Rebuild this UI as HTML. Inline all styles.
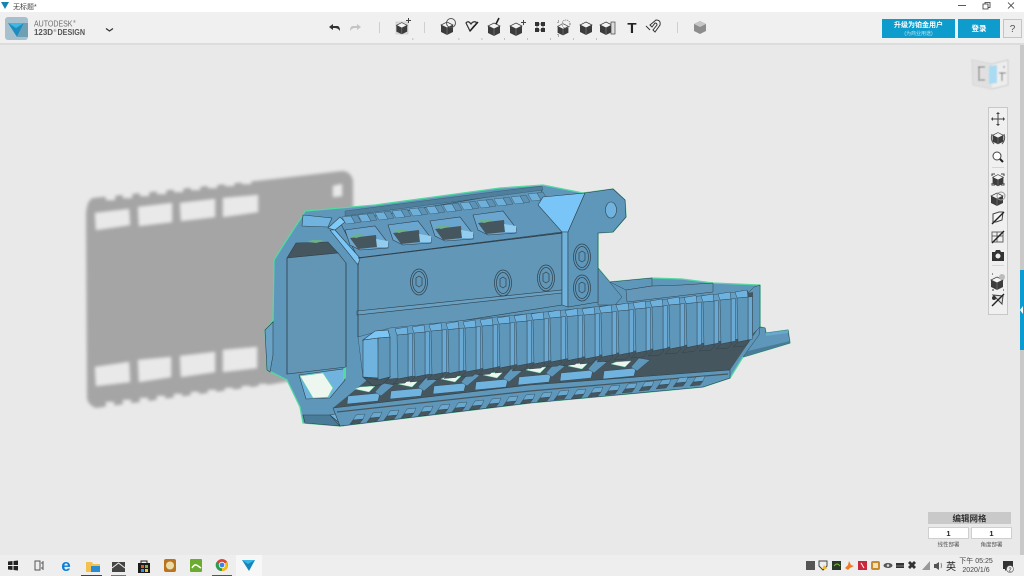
<!DOCTYPE html>
<html lang="zh"><head><meta charset="utf-8"><title>123D Design</title>
<style>
html,body{margin:0;padding:0;width:1024px;height:576px;overflow:hidden;background:#e9e9e9}
svg{display:block;position:absolute;left:0;top:0}
text{font-family:"Liberation Sans","Noto Sans CJK SC",sans-serif}
</style></head><body>
<svg width="1024" height="576" viewBox="0 0 1024 576" xmlns="http://www.w3.org/2000/svg">
<defs>
<filter id="b" x="-5%" y="-5%" width="110%" height="110%"><feGaussianBlur stdDeviation="1.600"/></filter>
<filter id="s" x="-20%" y="-20%" width="140%" height="140%"><feGaussianBlur stdDeviation="0.7"/></filter>
<g id="cube"><path d="M0-6 6-3 6 4 0 7-6 4-6-3Z" fill="#3c3c3c"/><path d="M0-6 6-3 0 0-6-3Z" fill="#f4f4f4" stroke="#3c3c3c" stroke-width=".7"/><path d="M0 0V7" stroke="#888" stroke-width=".6"/></g>
<g id="tooth" stroke="#2f414c" stroke-width=".45">
<path d="M13 7 17.500 6.500 17.500 49 13 50Z" fill="#69a9d3"/>
<path d="M2 8 13 7 13 50 3 52Z" fill="#5f97ba"/>
<path d="M0 2 12 0 13 7 2 8Z" fill="#6eb2e0"/>
<path d="M3 52 13 50 14 52 10 56-2 57Z" fill="#46565e"/>
</g>
<g id="btooth" stroke="#2f414c" stroke-width=".4">
<path d="M-4 6 6 5 3 9-7 10Z" fill="#46565e"/>
<path d="M-1 1 8 0 6 5-4 6Z" fill="#6ba8d0"/>
</g>
<g id="ttooth" stroke="#2f414c" stroke-width=".35">
<path d="M0 0 9-1 13 6 4 7Z" fill="#6eb0da"/>
<path d="M9-1 15-2 19 5 13 6Z" fill="#5b92b5"/>
</g>
<g id="win">
<path d="M345 230 375 226 388 243 388 248 360 250 350 245Z" fill="#6aa6cf" stroke="#2f414c" stroke-width=".6"/>
<path d="M350 238 376 235 377 247 358 249Z" fill="#46565e"/>
<path d="M376 239 388 241 388 247 377 247Z" fill="#92cdf0"/>
<path d="M349 236 358 234 366 235 356 238Z" fill="#6db08d"/>
</g>
<g id="cell" stroke="#2f414c" stroke-width=".4">
<path d="M398 384 403 382 418 381 412 387Z" fill="#ecf6ee" stroke="#5ad9a4"/>
<path d="M391 391 423 388 421 396 390 399Z" fill="#6fb3de"/>
<path d="M418 387 426 378 437 380 424 391Z" fill="#5f97ba"/>
</g>
<g id="screw" fill="none" stroke="#2f414c" stroke-width=".7">
<ellipse cx="0" cy="0" rx="8.500" ry="13"/><ellipse cx="0" cy="0" rx="6.500" ry="10.500"/>
<path d="M-3-4 0-6 3-4 3 3 0 5-3 3Z"/>
</g>
</defs>

<!-- canvas -->
<rect width="1024" height="576" fill="#e9e9e9"/>

<!-- shadow -->
<g filter="url(#b)">
<path d="M86 214Q87 200 93 198L265 180 342 171Q350 171 353 180L354 370 267 385 96 408Q88 405 87 398Z" fill="#a5a5a5"/>
<g fill="#e9e9e9">
<path d="M95 213 129 209 130 225 96 230Z"/><path d="M138 207 172 203 172 222 139 226Z"/><path d="M180 203 215 199 215 217 181 221Z"/><path d="M223 198 258 195 258 212 223 217Z"/>
<path d="M95 367 129 362 130 382 96 386Z"/><path d="M138 360 171 357 171 377 139 382Z"/><path d="M180 356 215 352 215 372 181 377Z"/><path d="M223 350 257 347 257 368 223 372Z"/>
<path d="M333 186 342 184 342 196 333 197Z"/>
<path d="M106 192h9v8h-9zM123 190h9v8h-9zM140 188h9v8h-9zM157 186h9v8h-9zM174 184h9v8h-9zM191 182h9v8h-9zM208 180h9v8h-9zM225 178h9v8h-9zM242 176h9v8h-9z"/>
<path d="M106 402h8v8h-8zM123 400h8v8h-8zM140 398h8v8h-8zM157 396h8v8h-8zM174 394h8v8h-8zM191 392h8v8h-8zM208 390h8v8h-8zM225 388h8v8h-8zM242 386h8v8h-8zM259 384h8v8h-8z"/>
</g></g>

<!-- model silhouette with green edge -->
<path id="sil" d="M274 260 284 244 303 215 305 211 375 205 500 188 543 185 583 193 613 189 625 200 626 217 613 232 598 233 598 268 610 282 652 278 682 279 713 283 760 285 760 327 765 328 766 333 788 330 790 343 750 355 743 357 730 378 703 387 530 403 340 426 303 423 300 407 287 380 267 370 265 330 273 320Z" fill="#5f97ba" stroke="#55d8a2" stroke-width="1.300" stroke-linejoin="round"/>

<!-- back rails / tail -->
<g stroke="#2f414c" stroke-width=".5">
<path d="M610 282 652 278 652 286 626 290Z" fill="#5f97ba"/>
<path d="M626 290 652 286 682 285 713 283 713 292 627 302Z" fill="#6598b8"/>
<path d="M598 268 622 297 615 305 598 305Z" fill="#5f97ba"/>
<path d="M743 357 759 335 760 327 765 328 766 333 788 330 790 343 750 355Z" fill="#5f97ba"/>
<path d="M766 333 788 330 788 333 766 336Z" fill="#6aa8d0" stroke="none"/>
<path d="M748 351 790 341 790 343 750 355 743 357Z" fill="#4a7c99" stroke="none"/>
</g>

<!-- front end: ring -->
<g stroke="#2f414c" stroke-width=".6">
<path d="M303 215 332 218 328 227 302 226Z" fill="#6fb3de"/>
<path d="M287 258 296 243 328 242 338 253Z" fill="#46565e"/>
<path d="M287 258 338 253 346 263 346 367 287 374Z" fill="#6396b5"/>
<path d="M307 242 312 240 320 240 324 241 316 243Z" fill="#6db08d" stroke="none"/>
<path d="M299 375 343 369 345 380 330 398 306 399Z" fill="#6fb3de"/>
<path d="M300 376 323 373 333 388 328 397 313 398Z" fill="#eef6f0" stroke="#5ad9a4"/>
<path d="M343 369 346 367 346 378 343 380Z" fill="#55d8a2" stroke="none"/>
<path d="M303 415 330 415 340 426 305 423Z" fill="#4a7c99"/>
<path d="M330 415 340 413 352 420 343 426Z" fill="#6fb3de"/>
<path d="M265 330 273 322 273 355 270 372 267 370Z" fill="#6ba3c6"/>
</g>

<!-- upper band -->
<g stroke="#2f414c" stroke-width=".6">
<path d="M340 222 540 188 562 232 358 258Z" fill="#5f96ba"/>
<path d="M358 258 562 233 562 305 358 337Z" fill="#6297b7"/>
<path d="M328 228 340 217 345 222 335 230Z" fill="#80caf8"/>
<path d="M335 230 360 258 358 265 330 230Z" fill="#7cc6f6"/>
<path d="M357 311 562 290 562 293 357 315Z" fill="#6aa0c2"/>
<path d="M358 258 562 233" fill="none" stroke-width="1"/>
</g>
<use href="#win"/><use href="#win" x="43" y="-5"/><use href="#win" x="85" y="-9"/><use href="#win" x="128" y="-15"/>
<path d="M345 211 500 191 542 186 543 190 345 216Z" fill="#4f7f9c" stroke="#2f414c" stroke-width=".3"/>
<use href="#ttooth" x="342" y="217"/><use href="#ttooth" x="358" y="215"/><use href="#ttooth" x="375" y="213"/><use href="#ttooth" x="392" y="211"/><use href="#ttooth" x="409" y="209"/><use href="#ttooth" x="426" y="207"/><use href="#ttooth" x="443" y="205"/><use href="#ttooth" x="460" y="203"/><use href="#ttooth" x="477" y="201"/><use href="#ttooth" x="494" y="199"/><use href="#ttooth" x="511" y="197"/><use href="#ttooth" x="528" y="194"/>

<!-- bracket -->
<g stroke="#2f414c" stroke-width=".6">
<path d="M543 197 585 193 568 232 562 232 538 205Z" fill="#7ac5f7"/>
<path d="M562 232 568 232 568 307 562 305Z" fill="#6fb3de"/>
<path d="M568 232 585 193 613 189 625 200 626 217 613 232 598 233 598 302 568 307Z" fill="#5f97ba"/>
<ellipse cx="611" cy="210" rx="5.500" ry="8" fill="#6fb3de"/>
</g>
<use href="#screw" x="582" y="257"/><use href="#screw" x="582" y="288"/><use href="#screw" x="419" y="282"/><use href="#screw" x="503" y="283"/><use href="#screw" x="546" y="278"/>

<!-- underside + lattice -->
<path d="M333 408 372 376 760 326 730 370 530 385Z" fill="#46565e"/>
<use href="#cell" x="-43" y="5"/><use href="#cell"/><use href="#cell" x="43" y="-5"/><use href="#cell" x="85" y="-9"/><use href="#cell" x="128" y="-14"/><use href="#cell" x="170" y="-18"/><use href="#cell" x="213" y="-20"/>
<!-- bottom rail -->
<path d="M333 408 530 385 730 370 730 378 703 387 530 403 340 426Z" fill="#5f97ba" stroke="#2f414c" stroke-width=".6"/>
<path d="M337 412 530 391 728 374" fill="none" stroke="#46565e" stroke-width="1.200"/>
<use href="#btooth" x="357" y="414"/><use href="#btooth" x="374" y="412"/><use href="#btooth" x="391" y="410"/><use href="#btooth" x="408" y="408"/><use href="#btooth" x="425" y="406"/><use href="#btooth" x="442" y="404"/><use href="#btooth" x="459" y="402"/><use href="#btooth" x="476" y="400"/><use href="#btooth" x="493" y="398"/><use href="#btooth" x="510" y="396"/><use href="#btooth" x="527" y="394"/><use href="#btooth" x="544" y="392"/><use href="#btooth" x="561" y="390"/><use href="#btooth" x="578" y="389"/><use href="#btooth" x="595" y="387"/><use href="#btooth" x="612" y="385"/><use href="#btooth" x="629" y="383"/><use href="#btooth" x="646" y="381"/><use href="#btooth" x="663" y="379"/><use href="#btooth" x="680" y="377"/><use href="#btooth" x="697" y="376"/>

<!-- rail body + teeth -->
<path d="M358 337 390 328 748 291 748 338 390 379 363 377Z" fill="#649fc6" stroke="#2f414c" stroke-width=".4"/>
<path d="M748 293 754 287 760 285 760 327 753 334 748 338Z" fill="#5f97ba" stroke="#2f414c" stroke-width=".5"/>
<path d="M748 293 753 292 753 335 748 338Z" fill="#46565e"/>
<use href="#tooth" x="395" y="327"/><use href="#tooth" x="412" y="325"/><use href="#tooth" x="429" y="323"/><use href="#tooth" x="446" y="321.500"/><use href="#tooth" x="463" y="320"/><use href="#tooth" x="480" y="318"/><use href="#tooth" x="497" y="316"/><use href="#tooth" x="514" y="314"/><use href="#tooth" x="531" y="312"/><use href="#tooth" x="548" y="310"/><use href="#tooth" x="565" y="308.500"/><use href="#tooth" x="582" y="307"/><use href="#tooth" x="599" y="305"/><use href="#tooth" x="616" y="303"/><use href="#tooth" x="633" y="301"/><use href="#tooth" x="650" y="299"/><use href="#tooth" x="667" y="297"/><use href="#tooth" x="684" y="295.500"/><use href="#tooth" x="701" y="294"/><use href="#tooth" x="718" y="292"/><use href="#tooth" x="735" y="290"/>
<g stroke="#2f414c" stroke-width=".6">
<path d="M363 340 378 338 379 378 363 377Z" fill="#6fb3de"/>
<path d="M378 338 390 337 390 377 378 380Z" fill="#5f97ba"/>
<path d="M363 340 375 331 388 330 390 337 378 338Z" fill="#7cc6f6"/>
<path d="M363 377 378 380 390 377 383 384 373 386Z" fill="#46565e"/>
</g>
<path d="M358 337 358 263M287 258V374M346 263V367" fill="none" stroke="#2f414c" stroke-width=".6"/>

<!-- title bar -->
<rect width="1024" height="12" fill="#fff"/>
<path d="M1 2 9 2 5 9Z" fill="#1683b5"/>
<text x="13" y="9" font-size="7" fill="#444">无标题*</text>
<path d="M958 5.500h8" stroke="#333" stroke-width=".8"/>
<path d="M983 4h5v5h-5zM985 4V2.500h5v5h-2" fill="none" stroke="#333" stroke-width=".8"/>
<path d="M1008 2.500 1014 8.500M1014 2.500 1008 8.500" stroke="#333" stroke-width=".8"/>

<!-- toolbar -->
<rect y="12" width="1024" height="31" fill="#f0f0f0"/>
<rect y="43" width="1024" height="2" fill="#dcdcdc"/>
<rect x="5" y="17" width="23" height="23" rx="3" fill="#a6c0cd"/>
<path d="M8 23 24 23 17 37Z" fill="#1d8dbf"/><path d="M8 23 24 23 16 28Z" fill="#41b7e3"/><path d="M24 23 17 37 28 37 28 23Z" fill="#6f9fb5"/>
<text x="34" y="26.700" font-size="8" fill="#6c6c6c" textLength="38.500" lengthAdjust="spacingAndGlyphs">AUTODESK</text>
<text x="73" y="23" font-size="4" fill="#6c6c6c">®</text>
<text x="34" y="35" font-size="8" fill="#555" font-weight="bold" textLength="19" lengthAdjust="spacingAndGlyphs">123D</text>
<text x="53.500" y="32" font-size="4" fill="#555">®</text>
<text x="57.500" y="35" font-size="8" fill="#555" font-weight="bold" textLength="27.500" lengthAdjust="spacingAndGlyphs">DESIGN</text>
<path d="M106 28.500 109.500 31 113 28.500" fill="none" stroke="#333" stroke-width="1.300"/>

<path d="M329 27 333 24V26H338Q340 27 340 31Q338 28 335 28H333V30Z" fill="#333"/>
<path d="M361 27 357 24V26H352Q350 27 350 31Q352 28 355 28H357V30Z" fill="#c4c4c4"/>
<path d="M379.500 22v11M424.500 22v11M677.500 22v11" stroke="#cfcfcf"/>

<rect x="396" y="22" width="12" height="12" fill="#dedede" stroke="#bbb" stroke-width=".5"/>
<use href="#cube" x="402" y="28" transform="translate(40 2.800) scale(.9)"/>
<path d="M406 20.500h5M408.500 18v5" stroke="#444"/>

<use href="#cube" x="447" y="28"/><circle cx="451" cy="23" r="4.500" fill="none" stroke="#555"/>
<path d="M466 23 470 31 474 26 Q477 24 476 22 Q473 21 471 24Q468 20 466 23Z" fill="#eee" stroke="#333" stroke-width="1.200"/><path d="M470 31 478 22" stroke="#222" stroke-width="1.500"/>
<use href="#cube" x="494" y="29"/><path d="M496 24 499 18" stroke="#222" stroke-width="1.600"/>
<use href="#cube" x="516" y="29"/><path d="M521 22.500h5M523.500 20v5" stroke="#444"/>
<path d="M535 22h4v4h-4zM541 22h4v4h-4zM535 28h4v4h-4zM541 28h4v4h-4z" fill="#333"/><path d="M539 24h2M537 26v2M543 26v2M539 30h2" stroke="#777"/>
<use href="#cube" x="563" y="29" transform="translate(56.300 3) scale(.9)"/><circle cx="566" cy="24" r="4" fill="none" stroke="#777" stroke-dasharray="1 1"/><path d="M558 23v-2h2M558 34v2h2" fill="none" stroke="#666" stroke-dasharray="1 1"/>
<use href="#cube" x="586" y="28"/>
<use href="#cube" x="606" y="28"/><rect x="611" y="22" width="4" height="12" fill="#ddd" stroke="#444" stroke-width=".7"/>
<text x="632" y="33" font-size="15" font-weight="bold" text-anchor="middle" fill="#222">T</text>
<path d="M650 25 656 20Q661 20 660 25L655 32 653 30 657 25Q657 23 655 23L652 27Z" fill="#f4f4f4" stroke="#333"/><path d="M646 26l4 4" stroke="#333"/>
<path d="M700 21 706 24 706 31 700 34 694 31 694 24Z" fill="#8d8d8d"/><path d="M700 21 706 24 700 27 694 24Z" fill="#c7c7c7"/>
<path d="M412.500 39h.8M458.500 39h.8M481.500 39h.8M504 39h.8M527 39h.8M550 39h.8M573 39h.8M596 39h.8" stroke="#777"/>

<rect x="882" y="19" width="73" height="19" fill="#0d9ccb"/>
<text x="918.500" y="27" font-size="7" font-weight="bold" fill="#fff" text-anchor="middle">升级为铂金用户</text>
<text x="918.500" y="35" font-size="5" fill="#bfe5f3" text-anchor="middle">(为商业用途)</text>
<rect x="958" y="19" width="42" height="19" fill="#0d9ccb"/>
<text x="979" y="31" font-size="7.500" font-weight="bold" fill="#fff" text-anchor="middle">登录</text>
<rect x="1003.500" y="19.500" width="18" height="18" fill="#ececec" stroke="#c4c4c4"/>
<text x="1012.500" y="32" font-size="10" fill="#555" text-anchor="middle">?</text>

<!-- scrollbar -->
<rect x="1020" y="45" width="4" height="510" fill="#c9c9c9"/>
<rect x="1020" y="270" width="4" height="80" fill="#0a9bd0"/>
<path d="M1023 306 1020 310 1023 314Z" fill="#fff"/>

<!-- viewcube -->
<g filter="url(#s)">
<path d="M972 60 992 64 1008 60 1008 85 992 89 973 85Z" fill="#ededed" stroke="#cdcdcd"/>
<path d="M972 60 992 64 992 89 973 85Z" fill="#e0e0e0"/>
<path d="M989 66 997 65 997 83 989 84Z" fill="#a9dcf2"/>
<path d="M978 67h7M979 67v14M980 80h5M1002 73v8M999 73h7M1004 66v2" stroke="#555" stroke-width="1" fill="none"/>
</g>

<!-- right panel -->
<rect x="988.500" y="107.500" width="19" height="207" fill="#f0f0f0" stroke="#c8c8c8"/>
<path d="M998 113V125M992 119H1004" stroke="#444"/><path d="M998 112l-2 2h4zM998 126l-2-2h4zM991 119l2-2v4zM1005 119l-2-2v4z" fill="#444"/>
<use href="#cube" x="998" y="138" transform="translate(99.800 13.800) scale(.9)"/><path d="M992 134Q990 140 994 144M1004 134Q1006 140 1002 144" fill="none" stroke="#555"/>
<circle cx="997" cy="156" r="4" fill="#fff" stroke="#444"/><path d="M1000 159 1003 162" stroke="#222" stroke-width="2"/>
<path d="M992 167.500h12M992 265.500h12" stroke="#d6d6d6"/>
<use href="#cube" x="998" y="180" transform="translate(99.800 18) scale(.9)"/><path d="M992 176v-2h3M1001 174h3v2M992 183v2h3M1001 185h3v-2" fill="none" stroke="#444"/>
<use href="#cube" x="997" y="199"/><circle cx="1001" cy="196" r="4" fill="none" stroke="#999"/>
<path d="M993 214l6-2h4l-1 8-6 2h-3z" fill="#f6f6f6" stroke="#444"/><path d="M992 224 1004 212" stroke="#222" stroke-width="1.400"/>
<path d="M992 232h11v10h-11zM992 236h11M997 232v10" fill="none" stroke="#666"/><path d="M992 243 1004 231" stroke="#222" stroke-width="1.400"/>
<path d="M992 252h3l1-2h4l1 2h3v9h-12z" fill="#333"/><circle cx="998" cy="256" r="2.500" fill="#eee"/>
<use href="#cube" x="997" y="283"/><circle cx="1002" cy="277" r="3" fill="#bbb"/><path d="M992 274h1M992 290h2M1003 290h1" stroke="#333"/>
<path d="M993 295 1002 304 1003 296Z" fill="#ddd" stroke="#444"/><path d="M992 306 1004 294" stroke="#222" stroke-width="1.400"/><circle cx="994" cy="298" r="2" fill="#333"/>

<!-- grid panel -->
<rect x="928" y="512" width="83" height="12" fill="#c9c9c9"/>
<text x="969.500" y="521.500" font-size="8.500" font-weight="bold" fill="#333" text-anchor="middle">编辑网格</text>
<rect x="928.500" y="527.500" width="40" height="11" fill="#fff" stroke="#cfcfcf"/>
<rect x="971.500" y="527.500" width="40" height="11" fill="#fff" stroke="#cfcfcf"/>
<text x="948.500" y="536" font-size="7.500" font-weight="bold" fill="#222" text-anchor="middle">1</text>
<text x="991.500" y="536" font-size="7.500" font-weight="bold" fill="#222" text-anchor="middle">1</text>
<text x="948.500" y="546.500" font-size="5.500" fill="#555" text-anchor="middle">线性部署</text>
<text x="991.500" y="546.500" font-size="5.500" fill="#555" text-anchor="middle">角度部署</text>

<!-- taskbar -->
<rect y="555" width="1024" height="21" fill="#eeeeee"/>
<rect x="236" y="555" width="26" height="21" fill="#f7f7f7"/>
<path d="M8 561.500 12.500 561V565H8zM13.500 561 18 560.500V565H13.500zM8 566H12.500V570L8 569.500zM13.500 566H18V570.500L13.500 570z" fill="#222"/>
<path d="M35 561h5v9h-5zM43 561v9" fill="none" stroke="#555"/><path d="M41 563h2M41 568h2" stroke="#555"/>
<text x="66" y="571" font-size="17" font-weight="bold" fill="#0c7fd6" text-anchor="middle">e</text>
<path d="M86 562h6l1 2h7v8H86z" fill="#f2c14e"/><path d="M91 566h9v6H91z" fill="#2a8bd3"/><rect x="81" y="575" width="21" height="1" fill="#444"/>
<path d="M112 562h13v10h-13z" fill="#444"/><path d="M112 568 118.500 563 125 568" fill="none" stroke="#eee"/><rect x="111" y="575" width="15" height="1" fill="#777"/>
<path d="M138 563h12v10h-12z" fill="#1b1b1b"/><path d="M141 563v-2h6v2" fill="none" stroke="#222"/><path d="M141 565h3v3h-3z" fill="#e8512a"/><path d="M145 565h3v3h-3z" fill="#7fb63c"/><path d="M141 569h3v3h-3z" fill="#2b9bdf"/><path d="M145 569h3v3h-3z" fill="#f4c32f"/>
<rect x="164" y="559" width="12" height="13" rx="2" fill="#b9741f"/><circle cx="170" cy="565.500" r="4" fill="#eadba8"/>
<rect x="190" y="559" width="12" height="13" rx="1" fill="#6bab2f"/><path d="M192 568q3-5 6-2l3 2" fill="none" stroke="#fff" stroke-width="1.500"/>
<circle cx="222" cy="565" r="6" fill="#dc4437"/><path d="M222 565 227 562A6 6 0 0 1 222 571Z" fill="#f4c20d"/><path d="M222 565 222 571A6 6 0 0 1 216.500 562Z" fill="#2a9d4c"/><circle cx="222" cy="565" r="2.800" fill="#3b82e4" stroke="#fff" stroke-width=".8"/><rect x="212" y="575" width="20" height="1" fill="#555"/>
<path d="M242 560H255L249 571Z" fill="#1486bc"/><path d="M242 560H255L248 564Z" fill="#39b5e6"/>

<!-- tray -->
<rect x="806" y="561" width="9" height="9" fill="#555"/>
<path d="M819 561h8v5l-4 4-4-4z" fill="#eee" stroke="#444"/><path d="M824 565l3 4h-5z" fill="#f0bd2e"/>
<rect x="832" y="561" width="9" height="9" fill="#2b3a26"/><path d="M834 566q3-4 6 0" stroke="#79b83a" fill="none"/>
<path d="M849 561l2 4 3 1-4 2-2 2-3-2 3-3z" fill="#ee7a22"/>
<rect x="858" y="561" width="9" height="9" fill="#c9283c"/><path d="M861 563l3 5" stroke="#fff"/>
<rect x="871" y="561" width="9" height="9" rx="2" fill="#c98a2c"/><rect x="873" y="563" width="5" height="5" fill="#f0e2b5"/>
<ellipse cx="888" cy="565.500" rx="4.500" ry="2.500" fill="#555"/><circle cx="888" cy="565.500" r="1.300" fill="#ddd"/>
<path d="M896 563h8v5h-8z" fill="#333"/><path d="M896 566h8" stroke="#ccc" stroke-width=".5"/>
<path d="M910 561l2 2 2-2 2 2-2 2 2 2-2 2-2-2-2 2-2-2 2-2-2-2z" fill="#333"/>
<path d="M922 570 930 561V570Z" fill="#999"/>
<path d="M934 564h2l3-2v8l-3-2h-2z" fill="#555"/><path d="M941 563q1 3 0 5" fill="none" stroke="#888"/>
<text x="951" y="570" font-size="10" fill="#222" text-anchor="middle">英</text>
<text x="976" y="563" font-size="7" fill="#444" text-anchor="middle">下午 05:25</text>
<text x="976" y="572" font-size="7" fill="#444" text-anchor="middle">2020/1/6</text>
<path d="M1003 561h10v8h-6l-2 2v-2h-2z" fill="#333"/><circle cx="1010" cy="569" r="3.500" fill="#eee" stroke="#555" stroke-width=".6"/><text x="1010" y="571.500" font-size="5.500" fill="#222" text-anchor="middle">2</text>
</svg>
</body></html>
